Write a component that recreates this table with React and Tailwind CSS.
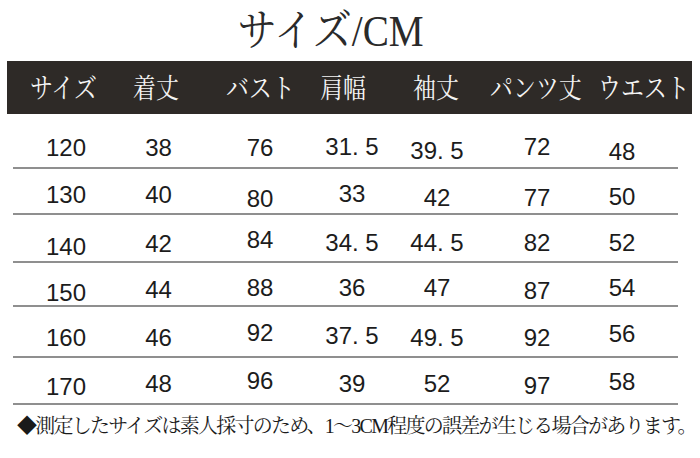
import React from 'react';

// Size chart — サイズ/CM

const HEADERS = [
  { label: 'サイズ', w: 'w-[103px]' },
  { label: '着丈', w: 'w-[93px]' },
  { label: 'バスト', w: 'w-[94px]' },
  { label: '肩幅', w: 'w-[93px]' },
  { label: '袖丈', w: 'w-[77px]' },
  { label: 'パンツ丈', w: 'w-[108px]' },
  { label: 'ウエスト', w: 'w-[94px]' },
];

// column widths for the data rows (cells are centred)
const COLS = ['w-[106px]', 'w-[79px]', 'w-[124px]', 'w-[60px]', 'w-[110px]', 'w-[90px]', 'w-[80px]'];

// each cell carries its own nudge: the source chart is not set on a strict baseline
const ROWS = [
  {
    h: 'h-[55px]',
    cells: [
      ['120', 'pt-[22px]'], ['38', 'pt-[22px]'], ['76', 'pt-[22px]'], ['31. 5', 'pt-[21px]'],
      ['39. 5', 'pt-[25px]'], ['72', 'pt-[21px]'], ['48', 'pt-[26px]'],
    ],
  },
  {
    h: 'h-[46px]',
    cells: [
      ['130', 'pt-[14px]'], ['40', 'pt-[14px]'], ['80', 'pt-[18px]'], ['33', 'pt-[13px]'],
      ['42', 'pt-[17px]'], ['77', 'pt-[17px]'], ['50', 'pt-[16px]'],
    ],
  },
  {
    h: 'h-[48px]',
    cells: [
      ['140', 'pt-[20px]'], ['42', 'pt-[17px]'], ['84', 'pt-[13px]'], ['34. 5', 'pt-[16px]'],
      ['44. 5', 'pt-[16px]'], ['82', 'pt-[16px]'], ['52', 'pt-[16px]'],
    ],
  },
  {
    h: 'h-[44px]',
    cells: [
      ['150', 'pt-[18px]'], ['44', 'pt-[15px]'], ['88', 'pt-[13px]'], ['36', 'pt-[13px]'],
      ['47', 'pt-[13px]'], ['87', 'pt-[16px]'], ['54', 'pt-[13px]'],
    ],
  },
  {
    h: 'h-[51px]',
    cells: [
      ['160', 'pt-[19px]'], ['46', 'pt-[19px]'], ['92', 'pt-[14px]'], ['37. 5', 'pt-[17px]'],
      ['49. 5', 'pt-[19px]'], ['92', 'pt-[19px]'], ['56', 'pt-[15px]'],
    ],
  },
  {
    h: 'h-[47px]',
    cells: [
      ['170', 'pt-[17px]'], ['48', 'pt-[14px]'], ['96', 'pt-[11px]'], ['39', 'pt-[14px]'],
      ['52', 'pt-[14px]'], ['97', 'pt-[16px]'], ['58', 'pt-[12px]'],
    ],
  },
];

const JP = "font-['Liberation_Serif','Noto_Serif_CJK_JP','Noto_Sans_CJK_JP',serif]";

export default function App() {
  return (
    <div className="w-[700px] h-[458px] bg-white overflow-hidden text-[#1c1c1c]">
      {/* Title */}
      <div className="h-[61px] pt-[10px] flex justify-center">
        <span
          className={`${JP} inline-block text-[44px] leading-[44px] text-[#2a2a2a] scale-x-89 ml-[-38px]`}
        >
          サイズ/CM
        </span>
      </div>

      {/* Header bar */}
      <div className="ml-[7px] w-[685px] h-[53px] bg-[#2e2a27] flex pl-[23px] pt-[15px]">
        {HEADERS.map((h) => (
          <div key={h.label} className={`${h.w} shrink-0`}>
            <span
              className={`${JP} inline-block origin-left scale-x-85 whitespace-nowrap text-[27px] leading-[27px] text-[#f4f4f4]`}
            >
              {h.label}
            </span>
          </div>
        ))}
      </div>

      {/* Rows */}
      {ROWS.map((row, i) => (
        <div key={i} className={`flex ml-[13px] w-[665px] ${row.h} border-b-2 border-[#8f8f8f]`}>
          {row.cells.map(([v, pt], j) => (
            <div
              key={j}
              className={`${COLS[j]} ${pt} shrink-0 flex justify-center whitespace-nowrap font-['Liberation_Sans',Arial,sans-serif] text-[24px] leading-6`}
            >
              {v}
            </div>
          ))}
        </div>
      ))}

      {/* Note */}
      <div className="pl-[17px] pt-[11px]">
        <p
          className={`${JP} whitespace-nowrap text-[20px] leading-[20px] tracking-[-1.75px] text-[#1a1a1a]`}
        >
          ◆測定したサイズは素人採寸のため、1～3CM程度の誤差が生じる場合があります。
        </p>
      </div>
    </div>
  );
}
